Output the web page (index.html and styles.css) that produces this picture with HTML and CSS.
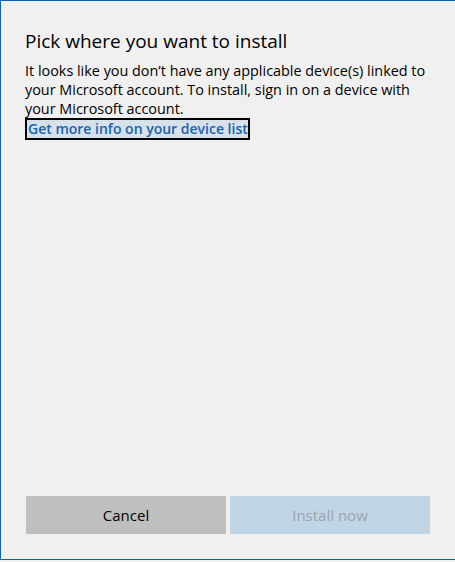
FILE: index.html
```html
<!DOCTYPE html>
<html lang="en">
<head>
<meta charset="utf-8">
<title>Pick where you want to install</title>
<link rel="stylesheet" href="styles.css">
</head>
<body>
<div class="window">
  <div class="content">
    <h1 class="title">Pick where you want to install</h1>
    <p class="message">It looks like you don’t have any applicable device(s) linked to your Microsoft account. To install, sign in on a device with your Microsoft account.</p>
    <a class="link" href="#">Get more info on your device list</a>
  </div>
  <div class="actions">
    <button class="btn btn-cancel" type="button">Cancel</button>
    <button class="btn btn-install" type="button" disabled>Install now</button>
  </div>
</div>
</body>
</html>
```

FILE: styles.css
```css
html, body {
  margin: 0;
  padding: 0;
  background: #f0f0f0;
  font-family: "Open Sans", "Noto Sans", "Liberation Sans", sans-serif;
  color: #000;
}

.window {
  box-sizing: border-box;
  width: 455px;
  height: 560px;
  border-top: 1px solid #0a64b8;
  border-left: 1px solid #0a64b8;
  border-bottom: 1px solid #0a64b8;
  display: flex;
  flex-direction: column;
  justify-content: space-between;
}

.content {
  padding: 27px 20px 0 24px;
  display: flex;
  flex-direction: column;
  align-items: flex-start;
}

.title {
  margin: 0 0 7px 0;
  font-size: 19px;
  font-weight: 400;
  line-height: 26px;
  color: #000;
}

.message {
  margin: 0;
  max-width: 406px;
  font-size: 14.4px;
  line-height: 19px;
  color: #000;
}

.link {
  box-sizing: border-box;
  margin-top: 0;
  border: 2px solid #000;
  background: #d7e1ea;
  color: #1763b0;
  font-size: 14px;
  font-weight: 600;
  line-height: 18px;
  padding: 0 0 0 1px;
  text-decoration: none;
}

.actions {
  display: flex;
  gap: 4px;
  padding: 0 0 25px 25px;
}

.btn {
  width: 200px;
  height: 38px;
  border: none;
  margin: 0;
  font-family: inherit;
  font-size: 15px;
  padding: 0;
}

.btn-cancel {
  background: #bfbfbf;
  color: #000;
}

.btn-install {
  background: #c0d6e7;
  color: #9aa4ad;
}
```
